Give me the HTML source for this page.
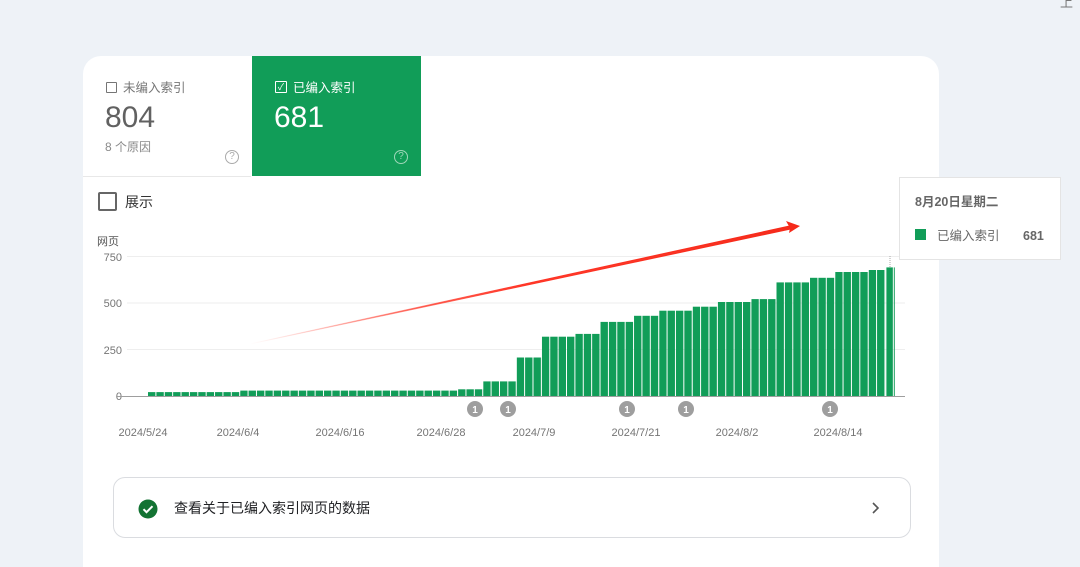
<!DOCTYPE html>
<html><head><meta charset="utf-8"><style>
html,body{margin:0;width:1080px;height:567px;overflow:hidden}
body{background:#eef2f7;position:relative;font-family:"Liberation Sans","Noto Sans CJK SC",sans-serif}
.card{position:absolute;left:83px;top:56px;width:856px;height:530px;background:#fff;border-radius:18px;overflow:hidden}
.abs{position:absolute}
</style></head><body>
<div class="abs" style="left:1060px;top:-8px;font-size:13px;color:#777">上</div>
<div class="card">
  <div class="abs" style="left:0;top:0;width:168px;height:120px;border-bottom:1px solid #e8e8e8"></div>
  <div class="abs" style="left:23px;top:26px;width:9px;height:9px;border:1.3px solid #757575;border-radius:1px"></div>
  <div class="abs" style="left:40px;top:21px;font-size:12.5px;color:#757575">未编入索引</div>
  <div class="abs" style="left:22px;top:45px;font-size:30px;color:#616161">804</div>
  <div class="abs" style="left:22px;top:82px;font-size:12px;color:#8a8a8a">8 个原因</div>
  <div class="abs" style="left:142px;top:94px;width:12px;height:12px;border:1.3px solid #aaa;border-radius:50%;font-size:10px;color:#aaa;text-align:center;line-height:12px">?</div>
  <div class="abs" style="left:169px;top:0;width:169px;height:120px;background:#119d58"></div>
  <div class="abs" style="left:192px;top:25px;width:10px;height:10px;border:1.3px solid #fff;border-radius:1px;color:#fff;font-size:9px;line-height:10px;text-align:center">✓</div>
  <div class="abs" style="left:210px;top:21px;font-size:12.5px;color:#fff">已编入索引</div>
  <div class="abs" style="left:191px;top:45px;font-size:30px;color:#fff">681</div>
  <div class="abs" style="left:311px;top:94px;width:12px;height:12px;border:1.3px solid #9fd7b9;border-radius:50%;font-size:10px;color:#9fd7b9;text-align:center;line-height:12px">?</div>
  <div class="abs" style="left:15px;top:136px;width:15px;height:15px;border:2px solid #666;border-radius:2px"></div>
  <div class="abs" style="left:42px;top:136px;font-size:14px;color:#333">展示</div>
  <div class="abs" style="left:30px;top:421px;width:796px;height:59px;border:1px solid #dadce0;border-radius:12px"></div>
  <svg class="abs" style="left:55px;top:443px" width="20" height="20"><circle cx="10" cy="10" r="9.5" fill="#137333"/><path d="M5.5 10.2l3 3 6-6" stroke="#fff" stroke-width="2" fill="none"/></svg>
  <div class="abs" style="left:91px;top:442px;font-size:14px;color:#202124">查看关于已编入索引网页的数据</div>
  <svg class="abs" style="left:787px;top:445px" width="12" height="14"><path d="M3 2l5 5-5 5" stroke="#555" stroke-width="1.6" fill="none"/></svg>
</div>
<svg class="abs" style="left:0;top:0" width="1080" height="567">
  <defs>
    <pattern id="bp" patternUnits="userSpaceOnUse" x="148" y="0" width="8.38" height="567"><rect x="0" y="0" width="7.4" height="567" fill="#119d58"/></pattern>
    <linearGradient id="rg" x1="250" y1="344" x2="800" y2="226" gradientUnits="userSpaceOnUse"><stop offset="0" stop-color="#ff2a1a" stop-opacity="0"/><stop offset="0.5" stop-color="#ff2a1a" stop-opacity="0.9"/><stop offset="1" stop-color="#f52a1a"/></linearGradient>
  </defs>
  <text x="97" y="245" font-size="11" fill="#555">网页</text>
  <g font-size="11" fill="#757575" text-anchor="end">
    <text x="122" y="261">750</text><text x="122" y="307">500</text><text x="122" y="354">250</text><text x="122" y="400">0</text>
  </g>
  <g stroke="#eeeeee" stroke-width="1"><line x1="127" y1="256.5" x2="905" y2="256.5"/><line x1="127" y1="303" x2="905" y2="303"/><line x1="127" y1="349.5" x2="905" y2="349.5"/></g>
  <g fill="url(#bp)">
    <rect x="148" y="392.1" width="92.2" height="3.9"/>
    <rect x="240.2" y="390.6" width="217.9" height="5.4"/>
    <rect x="458.1" y="389.3" width="25.1" height="6.7"/>
    <rect x="483.2" y="381.4" width="33.5" height="14.6"/>
    <rect x="516.7" y="357.5" width="25.1" height="38.5"/>
    <rect x="541.9" y="336.7" width="33.5" height="59.3"/>
    <rect x="575.4" y="333.9" width="25.1" height="62.1"/>
    <rect x="600.5" y="321.9" width="33.5" height="74.1"/>
    <rect x="634" y="315.8" width="25.1" height="80.2"/>
    <rect x="659.2" y="310.7" width="33.5" height="85.3"/>
    <rect x="692.7" y="306.7" width="25.1" height="89.3"/>
    <rect x="717.8" y="302" width="33.5" height="94"/>
    <rect x="751.4" y="299.1" width="25.1" height="96.9"/>
    <rect x="776.5" y="282.4" width="33.5" height="113.6"/>
    <rect x="810" y="277.8" width="25.1" height="118.2"/>
    <rect x="835.2" y="272" width="33.5" height="124"/>
    <rect x="868.7" y="270" width="16.8" height="126"/>
    <rect x="886.4" y="267.4" width="8.38" height="128.6"/>
  </g>
  <line x1="890" y1="256" x2="890" y2="268" stroke="#aaa" stroke-dasharray="1,1"/>
  <line x1="117" y1="396.5" x2="905" y2="396.5" stroke="#9e9e9e"/>
  <g fill="#9e9e9e"><circle cx="475" cy="409" r="8"/><circle cx="508" cy="409" r="8"/><circle cx="627" cy="409" r="8"/><circle cx="686" cy="409" r="8"/><circle cx="830" cy="409" r="8"/></g>
  <g fill="#fff" font-size="10" font-weight="bold" text-anchor="middle"><text x="475" y="413">1</text><text x="508" y="413">1</text><text x="627" y="413">1</text><text x="686" y="413">1</text><text x="830" y="413">1</text></g>
  <g font-size="11" fill="#757575" text-anchor="middle">
    <text x="143" y="436">2024/5/24</text><text x="238" y="436">2024/6/4</text><text x="340" y="436">2024/6/16</text><text x="441" y="436">2024/6/28</text><text x="534" y="436">2024/7/9</text><text x="636" y="436">2024/7/21</text><text x="737" y="436">2024/8/2</text><text x="838" y="436">2024/8/14</text>
  </g>
  <path d="M250 344 L792 225.5 L793 228.5 Z" fill="url(#rg)" stroke="url(#rg)" stroke-width="1"/>
  <path d="M800 226 L786 221 L790 228 L789 233 Z" fill="#f52a1a"/>
  <rect x="899.5" y="177.5" width="161" height="82" fill="#fff" stroke="#e4e4e4"/>
  <text x="915" y="206" font-size="12.5" font-weight="bold" fill="#666">8月20日星期二</text>
  <rect x="915" y="229" width="11" height="11" fill="#119d58"/>
  <text x="937" y="240" font-size="12.5" fill="#666">已编入索引</text>
  <text x="1023" y="240" font-size="12.5" font-weight="bold" fill="#666">681</text>
</svg>
</body></html>
